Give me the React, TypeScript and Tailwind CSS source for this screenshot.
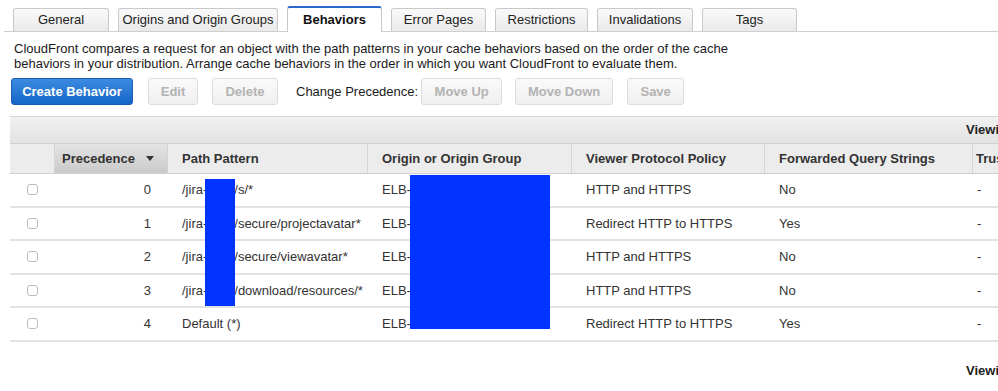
import React from 'react';

const tabs = ['General', 'Origins and Origin Groups', 'Behaviors', 'Error Pages', 'Restrictions', 'Invalidations', 'Tags'];
const tabWidths = ['w-[96px]', 'w-[160px]', 'w-[95px]', 'w-[95px]', 'w-[93px]', 'w-[96px]', 'w-[95px]'];

const rows = [
    { prec: 0, path: '/jira-xxxx/s/*', origin: 'ELB-jira', policy: 'HTTP and HTTPS', qs: 'No' },
    { prec: 1, path: '/jira-xxxx/secure/projectavatar*', origin: 'ELB-jira', policy: 'Redirect HTTP to HTTPS', qs: 'Yes' },
    { prec: 2, path: '/jira-xxxx/secure/viewavatar*', origin: 'ELB-jira', policy: 'HTTP and HTTPS', qs: 'No' },
    { prec: 3, path: '/jira-xxxx/download/resources/*', origin: 'ELB-jira', policy: 'HTTP and HTTPS', qs: 'No' },
    { prec: 4, path: 'Default (*)', origin: 'ELB-jira', policy: 'Redirect HTTP to HTTPS', qs: 'Yes' },
];

function GrayButton({ label, w }: { label: string; w: string }) {
    return (
        <button className={`${w} h-[27px] rounded-[3px] border border-[#dcdcdc] bg-gradient-to-b from-[#fafafa] to-[#f0f0f0] text-[13px] font-bold text-[#b3b3b3]`}>
            {label}
        </button>
    );
}

function PathCell({ path }: { path: string }) {
    // redacted segment is drawn by the overlay, so only show the visible parts
    if (!path.startsWith('/jira-')) return <span>{path}</span>;
    const rest = path.replace('/jira-xxxx', '');
    return (
        <span>
            /jira-<span className="inline-block w-[27px]" />{rest}
        </span>
    );
}

export default function App() {
    return (
        <div className="relative w-[998px] h-[391px] overflow-hidden bg-white text-[#222] font-['Liberation_Sans',Arial,sans-serif]">
            {/* Tabs */}
            <div className="flex items-end gap-[9px] pl-[9px] pt-[6px] border-b border-[#cfcfcf] ml-[4px] h-[32px]">
                {tabs.map((t, i) =>
                    t === 'Behaviors' ? (
                        <div
                            key={t}
                            className={`${tabWidths[i]} h-[26px] -mb-px flex items-center justify-center border border-b-0 border-[#c8c8c8] border-t-[2px] border-t-[#2a6ad0] rounded-t-[3px] bg-white text-[13px] font-bold text-[#111]`}
                        >
                            {t}
                        </div>
                    ) : (
                        <div
                            key={t}
                            className={`${tabWidths[i]} h-[23px] flex items-center justify-center border border-b-0 border-[#c8c8c8] rounded-t-[3px] bg-gradient-to-b from-[#fafafa] to-[#e9e9e9] text-[13px] text-[#222]`}
                        >
                            {t}
                        </div>
                    )
                )}
            </div>

            {/* Description */}
            <p className="pl-[14px] pt-[9px] text-[13px] leading-[15px] text-[#1a1a1a]">
                CloudFront compares a request for an object with the path patterns in your cache behaviors based on the order of the cache
                <br />
                behaviors in your distribution. Arrange cache behaviors in the order in which you want CloudFront to evaluate them.
            </p>

            {/* Buttons */}
            <div className="flex items-center pl-[11px] pt-[7px]">
                <button className="w-[122px] h-[27px] rounded-[3px] border border-[#1a5fb4] bg-gradient-to-b from-[#3c8be0] to-[#1465c8] text-[13px] font-bold text-white">
                    Create Behavior
                </button>
                <div className="ml-[15px]"><GrayButton label="Edit" w="w-[50px]" /></div>
                <div className="ml-[14px]"><GrayButton label="Delete" w="w-[66px]" /></div>
                <span className="ml-[18px] text-[13px] text-[#1a1a1a]">Change Precedence:</span>
                <div className="ml-[3px]"><GrayButton label="Move Up" w="w-[81px]" /></div>
                <div className="ml-[13px]"><GrayButton label="Move Down" w="w-[98px]" /></div>
                <div className="ml-[14px]"><GrayButton label="Save" w="w-[57px]" /></div>
            </div>

            {/* Table */}
            <div className="ml-[10px] mt-[11px] w-[1100px]">
                <div className="h-[27px] border-t border-[#d6d6d6] bg-gradient-to-b from-[#f1f1f1] to-[#e3e3e3] flex items-center pl-[956px] text-[13px] font-bold text-[#222]">
                    Viewing
                </div>
                <div className="flex h-[31px] border-t border-b border-[#d0d0d0] bg-[#ececec] text-[13px] font-bold text-[#333] whitespace-nowrap">
                    <div className="w-[45px] border-r border-[#d4d4d4]" />
                    <div className="w-[113px] flex items-center justify-between pl-[7px] pr-[13px] border-r border-[#d4d4d4] bg-gradient-to-b from-[#e4e4e4] to-[#cacaca]">
                        <span>Precedence</span>
                        <svg width="8" height="5" viewBox="0 0 8 5"><path d="M0 0h8L4 5z" fill="#333" /></svg>
                    </div>
                    <div className="w-[200px] flex items-center pl-[14px] border-r border-[#d4d4d4]">Path Pattern</div>
                    <div className="w-[204px] flex items-center pl-[14px] border-r border-[#d4d4d4]">Origin or Origin Group</div>
                    <div className="w-[193px] flex items-center pl-[14px] border-r border-[#d4d4d4]">Viewer Protocol Policy</div>
                    <div className="w-[208px] flex items-center pl-[14px] border-r border-[#d4d4d4]">Forwarded Query Strings</div>
                    <div className="w-[130px] flex items-center pl-[3px]">Trusted Signers</div>
                </div>
                {rows.map(r => (
                    <div key={r.prec} className="flex h-[33.5px] border-b-[2px] border-[#e2e2e2] items-center text-[13px] text-[#333]">
                        <div className="w-[45px] flex justify-center">
                            <div className="w-[11px] h-[11px] rounded-[3px] border border-[#bdbdbd] bg-white" />
                        </div>
                        <div className="w-[113px] text-right pr-[17px]">{r.prec}</div>
                        <div className="w-[200px] pl-[14px] whitespace-nowrap"><PathCell path={r.path} /></div>
                        <div className="w-[204px] pl-[14px]">ELB-</div>
                        <div className="w-[193px] pl-[14px]">{r.policy}</div>
                        <div className="w-[208px] pl-[14px]">{r.qs}</div>
                        <div className="w-[100px] pl-[4px]">-</div>
                    </div>
                ))}
                <div className="pt-[19px] pl-[956px] text-[13px] font-bold text-[#222]">Viewing</div>
            </div>

            {/* Redaction overlays */}
            <div className="absolute left-[205px] top-[179px] w-[30px] h-[127px] bg-[#0033ff]" />
            <div className="absolute left-[410px] top-[175px] w-[140px] h-[154px] bg-[#0033ff]" />
        </div>
    );
}
